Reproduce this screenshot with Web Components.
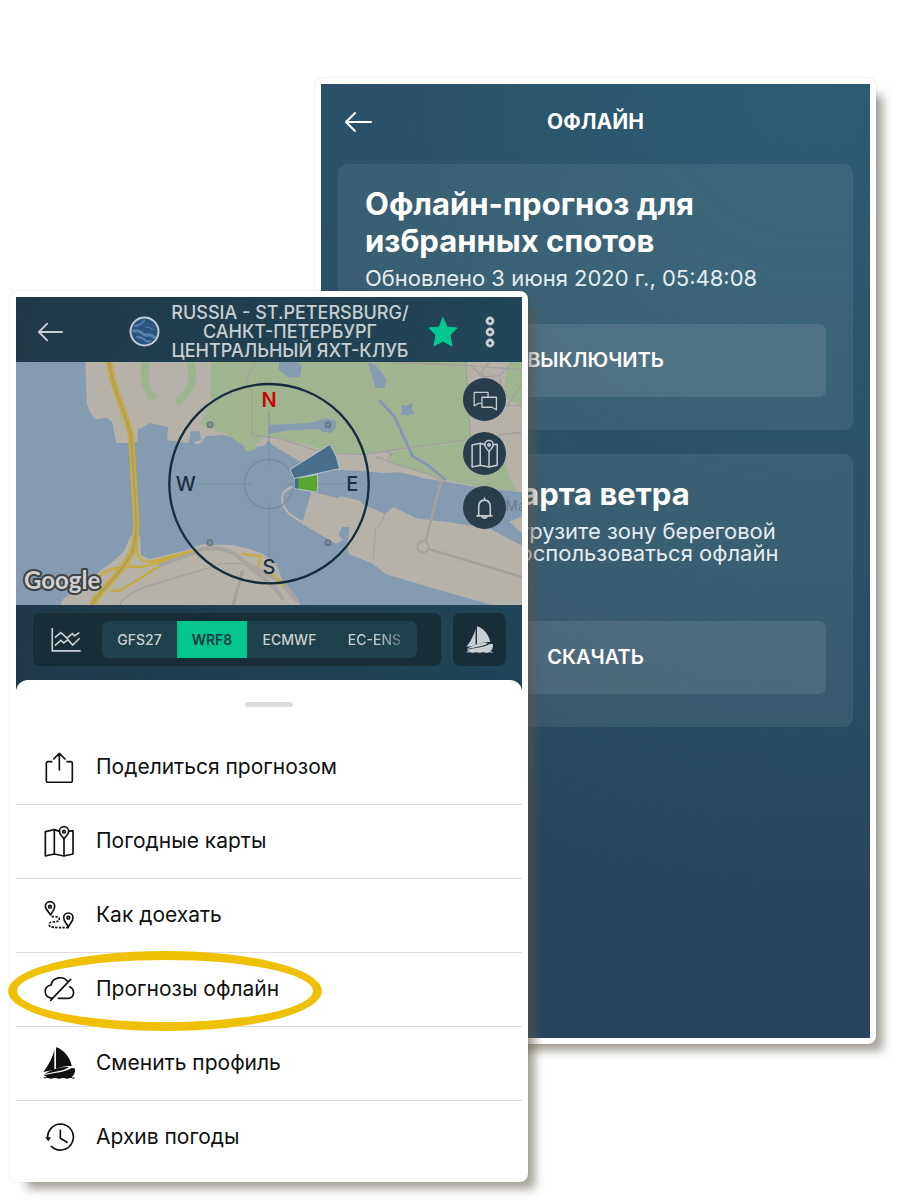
<!DOCTYPE html>
<html lang="ru">
<head>
<meta charset="utf-8">
<meta name="viewport" content="width=device-width, initial-scale=1">
<title>Прогнозы офлайн</title>
<style>
  body { margin: 0; background: #fff; font-family: Inter, "Liberation Sans", sans-serif; }
</style>
</head>
<body>
<screen-stage>
  <offline-screen slot="back"></offline-screen>
  <spot-screen slot="front"></spot-screen>
</screen-stage>

<script>
const ICONS = {
  back: ['0 0 28 22', '<path d="M27 11H2M11 2L2 11l9 9" stroke-width="2"/>'],
  star: ['0 0 30 30', '<path d="M15 1l4 9 10 1-7 7 2 11-9-5-9 5 2-11-7-7 10-1z" fill="currentColor" stroke-width="1"/>'],
  dots: ['0 0 12 32', '<g stroke-width="2.8"><circle cx="6" cy="5" r="3"/><circle cx="6" cy="16" r="3"/><circle cx="6" cy="27" r="3"/></g>'],
  share: ['129 183 96 96', '<path d="M155 215H144q-5 0-5 5v52q0 5 5 5h68q5 0 5-5v-52q0-5-5-5h-11M178 240v-49M161 207l17-17 17 17"/>'],
  map: ['129 405 96 96', '<path d="M179 424l-16-5-27 6v73l27-6 29 6 27-6v-70l-13 2M163 419v73M192 447v51"/><path d="M192 447c-4-8-14-13-14-23a14 14 0 0 1 28 0c0 10-10 15-14 23z"/><circle cx="192" cy="425" r="4"/>'],
  route: ['129 627 96 96', '<path d="M152 675c-3-8-16-15-16-26a14 14 0 0 1 28 0c0 11-9 18-12 26z"/><circle cx="150" cy="650" r="4"/><path d="M205 711c-3-9-14-16-14-28a14 14 0 0 1 28 0c0 12-11 19-14 28z"/><circle cx="205" cy="683" r="4"/><path d="M155 680c10 0 23-2 23 7s-10 8-19 9c-8 0-12 3-12 8 0 9 18 9 60 9" stroke-dasharray="7 4" stroke-width="5" stroke-linecap="butt"/>'],
  cloud: ['129 131 96 96', '<path d="M156 207c-26-4-27-35-3-40 5-25 39-29 51-9M209 172c18 9 14 35-5 35h-29M152 213l60-63"/>'],
  sail: ['129 354 96 96', '<g fill="currentColor" stroke="none"><path d="M168 355c21 4 45 33 47 56-17-1-31 3-47 9zM163 361v61l-33 7c15-20 29-44 33-68z"/><path d="M131 439c28-8 62-8 84-22 4 0 8 1 11 2-1 12-4 20-11 25 3 1 5 2 9 2v3c-7 0-9-2-12-2s-5 2-11 2-8-2-12-2-6 2-12 2-8-2-12-2-6 2-12 2-7-2-11-2-5 1-10 1v-3c4 0 6 0 9-1z"/><path d="M131 437c20-14 54-27 75-22-13 12-49 13-75 22z"/></g>'],
  history: ['129 576 96 96', '<path d="M143 630c-3-23 15-45 39-45a39 39 0 1 1-28 67M181 604v24l20 12"/><path d="M136 625h17l-8 12z" fill="currentColor" stroke="none"/>'],
  chart: ['147 500 100 80', '<path d="M154 504v70h87M164 531l17-14 19 17 17-14 7 7 13-9M164 556l17-15 9 8 13-10 15 17 20-20" stroke-linejoin="miter"/>'],
  chat: ['628 315 90 90', '<path d="M665 372h-11l-13 8v-42h43v14M665 353h45v39l-14-8h-31z" stroke-width="4"/>'],
  bell: ['628 99 90 90', '<path d="M650 170h46M655 170v-26c0-14 7-23 18-23s18 9 18 23v26M666 174q7 6 14 0M673 121v-6"/>']
};

function define(name, html, setup) {
  const t = document.createElement('template');
  t.innerHTML = html;
  customElements.define(name, class extends HTMLElement {
    constructor() {
      super();
      this.attachShadow({ mode: 'open' }).append(t.content.cloneNode(true));
    }
    connectedCallback() { if (setup) setup.call(this, this.shadowRoot); }
  });
}

define('app-icon', `
  <style>
    :host { display: block; width: 32px; height: 32px; flex: none; }
    svg { display: block; width: 100%; height: 100%; fill: none; stroke: currentColor; stroke-width: 5; stroke-linejoin: round; stroke-linecap: round; }
  </style>
  <svg aria-hidden="true"></svg>`,
  function (root) {
    const [box, body] = ICONS[this.getAttribute('name')];
    const svg = root.querySelector('svg');
    svg.setAttribute('viewBox', box);
    svg.innerHTML = body;
  });

define('screen-stage', `
  <style>
    :host { display: grid; grid-template-columns: 305fr 213fr 348fr; padding: 78px 24px 18px 10px; align-items: start; }
    ::slotted(*) { grid-row: 1; border: 6px solid #fff; border-radius: 8px; min-width: 0;
      box-shadow: 12px 12px 10px -5px rgba(94, 88, 72, .55), 0 0 2px rgba(0, 0, 0, .15); }
    slot[name=back]::slotted(*) { grid-column: 2 / 4; }
    slot[name=front]::slotted(*) { grid-column: 1 / 3; margin-top: 213px; z-index: 1; }
  </style>
  <slot name="back"></slot><slot name="front"></slot>`);

define('offline-card', `
  <style>
    :host { display: block; padding: 21px 27px 33px; border-radius: 9px; background: rgba(255, 255, 255, .08); }
    h2 { margin: 0 0 8px; font-size: 31px; line-height: 37px; font-weight: 700; }
    p { margin: 0 0 35px; min-height: var(--note-height, 22px); font-size: 22px; line-height: 22px; white-space: nowrap; color: #e6edf0; }
    button { display: block; width: 100%; height: 73px; padding: 0 0 2px; border: 0; border-radius: 7px; background: rgba(255, 255, 255, .1);
      color: #fff; font: 600 20px/24px Inter, sans-serif; }
  </style>
  <h2><slot name="title"></slot></h2>
  <p><slot></slot></p>
  <button type="button"><slot name="action"></slot></button>`);

define('offline-screen', `
  <style>
    :host { display: block; color: #fff; background: #28465b; }
    .screen { padding: 0 17px 311px 17px; background: radial-gradient(circle at 90% 0, #2c5d73 0, #2a5167 45%, #28465b 75%); }
    header { display: grid; grid-template-columns: 1fr auto 1fr; align-items: center; height: 76px; padding: 0 6px 4px; }
    h1 { margin: 0; font-size: 21px; line-height: 24px; font-weight: 700; }
    button { justify-self: start; padding: 0; border: 0; background: none; color: inherit; }
    button app-icon { width: 28px; height: 22px; }
    main { display: grid; gap: 24px; }
    .wind { --note-height: 66px; }
  </style>
  <div class="screen">
    <header><button type="button" aria-label="Назад"><app-icon name="back"></app-icon></button><h1>ОФЛАЙН</h1></header>
    <main>
      <offline-card>
        <span slot="title">Офлайн-прогноз для<br>избранных спотов</span>
        Обновлено 3 июня 2020 г., 05:48:08
        <span slot="action">ВЫКЛЮЧИТЬ</span>
      </offline-card>
      <offline-card class="wind">
        <span slot="title">Офлайн-карта ветра</span>
        Выберите и загрузите зону береговой<br>линии чтобы воспользоваться офлайн
        <span slot="action">СКАЧАТЬ</span>
      </offline-card>
    </main>
  </div>`);

define('spot-map', `
  <style>
    :host { display: block; position: relative; aspect-ratio: 506 / 243; overflow: hidden; background: #849bb1; }
    svg { display: block; width: 100%; height: 100%; font-family: Inter, sans-serif; }
    nav { position: absolute; top: 16px; right: 16px; display: grid; gap: 11px; }
    button { display: grid; place-items: center; width: 43px; height: 43px; padding: 0; border: 0; border-radius: 50%; background: #293e4c; color: #c5ccd0; }
    app-icon { width: 29px; height: 29px; }
  </style>
  <svg viewBox="0 195 1518 729" preserveAspectRatio="xMidYMid slice" role="img" aria-label="Карта">
    <g fill="#b6b2aa">
      <path d="M208 195L212 320 225 350 240 367 272 362 290 378 300 438 340 438 364 434 366 398 402 378 446 388 456 390 454 430 518 438 524 404 550 402 556 430 536 434V441L552 440 570 418 620 414 660 424 700 452 746 446 756 430 768 444 850 492 960 518 1070 524 1100 528 1150 526 1230 545 1275 552 1380 570 1518 586V195z"/>
      <path d="M886 584L965 603 975 597 1035 612 1040 622 1106 650 1134 630 1200 664 1300 676 1420 694 1475 724 1518 745V924H1430L1300 888 1110 832 1070 800 1000 772 994 750 1000 690 978 690 968 712 980 730 960 741 858 680z"/>
      <path d="M1476 676L1518 658V708z"/>
      <path d="M134 924Q140 896 170 890L250 824Q310 780 325 760L344 716 372 714 376 775 400 786 510 760 560 742 650 744 700 756 740 770 780 800 800 850 845 905 852 924z"/>
    </g>
    <path d="M832 570C780 580 786 640 858 675" fill="none" stroke="#b9b7b0" stroke-width="6"/>
    <g fill="#9fb58f">
      <path d="M584 195H1350L1358 300 1362 420 1358 432 1060 470 970 470 860 440 790 424 746 418 722 440 718 458 690 464 682 446 630 410 570 392 552 378 584 320z"/>
      <path d="M1118 466L1350 434 1462 500 1518 560V585L1390 570 1288 548 1120 496z"/>
      <path d="M1478 195H1518V326L1498 318 1464 300 1468 230z"/>
    </g>
    <path d="M1356 436L1400 430 1480 540 1500 583 1518 586V405L1366 425z" fill="#b6b2aa"/>
    <path d="M1340 434L1466 500 1496 583 1390 570 1300 550z" fill="#9fb58f"/>
    <g fill="none" stroke="#9fb58f" stroke-width="24"><path d="M390 195C380 245 390 285 416 306"/><path d="M524 195C538 250 520 292 480 316"/></g>
    <g fill="#849bb1">
      <path d="M790 195H846L858 208 852 240 820 242 788 218zM1056 195L1078 204 1112 248 1104 274 1078 272zM1154 324L1170 326 1190 318 1188 336 1196 350 1182 354 1176 360 1168 352 1152 356 1158 342z"/>
      <path d="M760 384L880 378 930 364 958 370 962 388 944 408 920 404 910 396 820 400 760 410z"/>
      <path d="M1440 676L1478 672 1518 712V738z"/>
    </g>
    <path d="M1090 310L1135 358 1190 478 1235 504 1290 550" fill="none" stroke="#8299b5" stroke-width="8"/>
    <g fill="none" stroke="#a4a09e" stroke-width="4">
      <path d="M720 200C690 235 680 250 708 280L708 414 790 424 930 470 1050 472 1110 462 1518 405M1080 480L1110 490 1130 470 1096 462M1110 490C1150 510 1230 520 1276 550M1350 195L1356 300 1364 425M1120 195L1360 206 1518 218M1420 195L1396 224 1404 240 1450 236 1490 195M1450 236L1464 300M1366 208L1400 240M1518 260L1474 326 1518 326"/>
      <path d="M310 924C330 890 370 874 420 860L620 800 680 800"/><path d="M652 924L680 820" stroke-width="10"/>
      <path d="M1276 550L1228 735M1238 756L1518 840" stroke-width="8"/><circle cx="1221" cy="749" r="17" stroke-width="6"/>
      <path d="M1106 650L1096 676 1078 700 1072 790" stroke="#95a4b0" stroke-width="3"/>
    </g>
    <path d="M425 808L560 756C620 746 660 765 690 800L790 850 846 915M690 800C730 840 790 870 800 910" fill="none" stroke="#a7a3a0" stroke-width="12"/>
    <g fill="none" stroke="#c6ac3f">
      <path d="M279 195C288 270 330 350 345 415L356 590C362 670 364 730 346 770 320 825 270 860 226 924" stroke-width="19"/>
      <path d="M360 740C362 790 380 805 430 788L530 762M250 838C280 810 330 806 370 810 420 808 450 780 530 762M285 880L310 882 430 808M676 770L735 778 726 810M765 826L802 868" stroke-width="7"/>
      <path d="M279 195C288 270 330 350 345 415L356 590C362 670 364 730 346 770 320 825 270 860 226 924" stroke="#a0987a" stroke-width="4"/>
    </g>
    <g fill="none" stroke="#6f8598" stroke-width="4" opacity=".65">
      <circle cx="759" cy="561" r="74"/><path d="M540 561H706M812 561H980M759 340V506M759 614V780" stroke-width="3"/>
    </g>
    <g fill="#7b8b92" stroke="#5d707b" stroke-width="5" opacity=".8"><circle cx="582" cy="383" r="8"/><circle cx="936" cy="383" r="8"/><circle cx="582" cy="737" r="8"/><circle cx="936" cy="737" r="8"/></g>
    <path d="M822 518L942 442Q964 476 971 515L834 545z" fill="#476f8c" stroke="#bac5ca" stroke-width="3"/>
    <path d="M834 545L904 533Q908 560 903 586L836 574z" fill="#58a52f" stroke="#bac5ca" stroke-width="3"/><path d="M836 546L847 544V575L836 573z" fill="#3a6d93"/>
    <circle cx="759" cy="560" r="299" fill="none" stroke="#142d3d" stroke-width="7"/>
    <g font-size="60" font-weight="500" text-anchor="middle" fill="#18303f">
      <text x="759" y="330" font-weight="600" fill="#c90508">N</text><text x="509" y="581">W</text><text x="1009" y="581">E</text><text x="759" y="831">S</text>
    </g>
    <text x="1468" y="643" font-size="42" fill="#6e7c8e">Ма</text>
    <text x="24" y="877" font-family="Lato, sans-serif" font-size="72" font-weight="700" fill="#cfcfcf" stroke="#3e4145" stroke-width="12" stroke-linejoin="round" paint-order="stroke">Google</text>
  </svg>
  <nav>
    <button type="button" aria-label="Чат"><app-icon name="chat"></app-icon></button>
    <button type="button" aria-label="Карты"><app-icon name="map"></app-icon></button>
    <button type="button" aria-label="Уведомления"><app-icon name="bell"></app-icon></button>
  </nav>`);

define('spot-header', `
  <style>
    :host { display: grid; grid-template-columns: 1fr auto 1fr; align-items: center; height: 65px; padding: 4px 21px 0; box-sizing: border-box;
      color: #c8cfd2; background: linear-gradient(100deg, #1f3949, #224658); }
    button { display: block; padding: 0; border: 0; background: none; color: inherit; }
    .back { width: 26px; height: 22px; }
    .spot { display: flex; align-items: center; gap: 11px; }
    .spot svg { width: 31px; height: 31px; flex: none; }
    h1 { margin: 0; font-size: 18px; line-height: 19px; font-weight: 500; text-align: center; white-space: nowrap; }
    .tools { display: flex; justify-content: space-between; align-items: center; padding: 0 5px 0 19px; }
    .star { width: 30px; height: 30px; color: #04c78f; }
    .dots { width: 12px; height: 32px; }
  </style>
  <div><button type="button" aria-label="Назад"><app-icon class="back" name="back"></app-icon></button></div>
  <div class="spot">
    <svg viewBox="0 0 31 31" aria-hidden="true">
      <circle cx="15.5" cy="15.5" r="14" fill="#2b5481" stroke="#c5cbd2" stroke-width="2"/>
      <g fill="none" stroke="#7d9cbb" stroke-linecap="round" opacity=".6"><path d="M6 10q5 0 9-5" stroke-width="2"/><path d="M5 15q5-1 8 2t6 2 7 3" stroke-width="3"/><path d="M8 21q5 0 8 3t5 1" stroke-width="2"/><path d="M17 11q4 0 8 3" stroke-width="1"/></g>
    </svg>
    <h1>RUSSIA - ST.PETERSBURG/<br>САНКТ-ПЕТЕРБУРГ<br>ЦЕНТРАЛЬНЫЙ ЯХТ-КЛУБ</h1>
  </div>
  <div class="tools">
    <button type="button" aria-label="В избранном"><app-icon class="star" name="star"></app-icon></button>
    <button type="button" aria-label="Ещё"><app-icon class="dots" name="dots"></app-icon></button>
  </div>`);

define('model-bar', `
  <style>
    :host { display: flex; gap: 12px; padding: 8px 16px 26px 17px; color: #c9d0d2; background: linear-gradient(100deg, #1f394a, #204558); }
    .models { flex: 1; display: flex; align-items: center; height: 53px; padding: 0 24px 0 17px; gap: 20px; box-sizing: border-box; border-radius: 7px; background: #172e39; }
    .chart { width: 32px; height: 26px; }
    .tabs { flex: 1; display: grid; grid-template-columns: 75fr 70fr 85fr 85fr; height: 37px; border-radius: 7px; overflow: hidden; background: #1f414d; }
    button { padding: 0; border: 0; background: none; color: inherit; font: 500 14px/17px Inter, sans-serif; }
    .on { background: #04c58e; color: #173b47; font-weight: 600; }
    .last { color: transparent; background: linear-gradient(90deg, #c9d0d2 50%, #536e77 85%); background-clip: text; -webkit-background-clip: text; }
    .sail { display: grid; place-items: center; width: 53px; height: 53px; border-radius: 7px; background: #172e39; }
    .sail app-icon { width: 27px; height: 27px; }
  </style>
  <div class="models">
    <app-icon class="chart" name="chart"></app-icon>
    <div class="tabs">
      <button type="button">GFS27</button><button type="button" class="on">WRF8</button><button type="button">ECMWF</button><button type="button" class="last">EC-ENS</button>
    </div>
  </div>
  <button type="button" class="sail" aria-label="Профиль"><app-icon name="sail"></app-icon></button>`);

define('menu-item', `
  <style>
    :host { display: block; position: relative; border-bottom: 1px solid #dcdcdc; }
    :host(:last-child) { border-bottom-color: transparent; }
    button { display: flex; align-items: center; gap: 21px; width: 100%; height: 73px; padding: 0 27px 2px; border: 0; background: none;
      color: #111; font: 400 21px/26px Inter, sans-serif; text-align: left; }
    :host([marked])::after { content: ""; position: absolute; left: -8px; top: -2px; width: 314px; height: 80px; box-sizing: border-box;
      border: 9px solid #efc106; border-radius: 50%; pointer-events: none; }
  </style>
  <button type="button"><span><slot></slot></span></button>`,
  function (root) {
    if (root.querySelector('app-icon')) return;
    const icon = document.createElement('app-icon');
    icon.setAttribute('name', this.getAttribute('icon'));
    root.querySelector('button').prepend(icon);
  });

define('action-sheet', `
  <style>
    :host { display: block; position: relative; margin-top: -12px; padding: 22px 0 1px; border-radius: 12px 12px 0 0; background: #fff; }
    .grip { width: 48px; height: 5px; margin: 0 auto 24px; border-radius: 3px; background: #dcdcdc; }
  </style>
  <div class="grip"></div>
  <slot></slot>`);

define('spot-screen', `
  <style>
    :host { display: block; background: #fff; }
  </style>
  <spot-header></spot-header>
  <spot-map></spot-map>
  <model-bar></model-bar>
  <action-sheet>
    <menu-item icon="share">Поделиться прогнозом</menu-item>
    <menu-item icon="map">Погодные карты</menu-item>
    <menu-item icon="route">Как доехать</menu-item>
    <menu-item icon="cloud" marked>Прогнозы офлайн</menu-item>
    <menu-item icon="sail">Сменить профиль</menu-item>
    <menu-item icon="history">Архив погоды</menu-item>
  </action-sheet>`);
</script>
</body>
</html>
